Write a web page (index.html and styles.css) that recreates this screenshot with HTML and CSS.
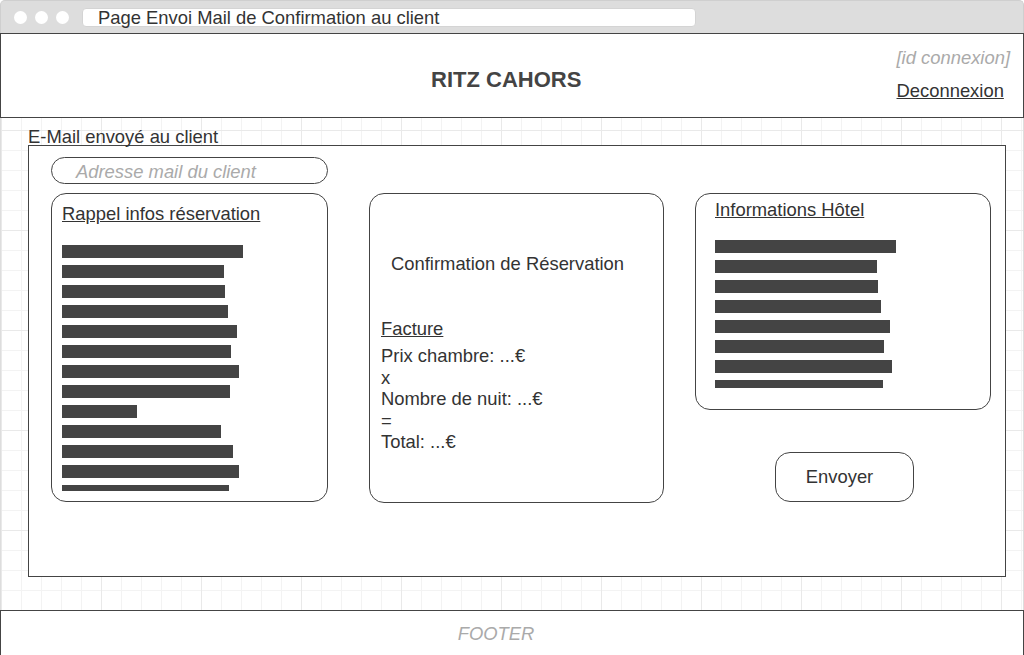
FILE: index.html
```html
<!DOCTYPE html>
<html lang="fr">
<head>
<meta charset="utf-8">
<title>Page Envoi Mail de Confirmation au client</title>
<link rel="stylesheet" href="styles.css">
</head>
<body>
<div class="window">
  <div class="chrome">
    <span class="dot"></span><span class="dot"></span><span class="dot"></span>
    <div class="address">Page Envoi Mail de Confirmation au client</div>
  </div>
  <header class="header">
    <div class="brand">RITZ CAHORS</div>
    <div class="account">
      <div class="id">[id connexion]</div>
      <a class="logout" href="#">Deconnexion</a>
    </div>
  </header>
  <main class="main">
    <div class="section-label">E-Mail envoyé au client</div>
    <div class="frame">
      <div class="email-input">Adresse mail du client</div>
      <div class="row">
        <div class="card card-left">
          <div class="card-title">Rappel infos réservation</div>
          <div class="bars bars-left">
            <div class="bar" style="width:181px"></div>
            <div class="bar" style="width:162px"></div>
            <div class="bar" style="width:163px"></div>
            <div class="bar" style="width:166px"></div>
            <div class="bar" style="width:175px"></div>
            <div class="bar" style="width:169px"></div>
            <div class="bar" style="width:177px"></div>
            <div class="bar" style="width:168px"></div>
            <div class="bar" style="width:75px"></div>
            <div class="bar" style="width:159px"></div>
            <div class="bar" style="width:171px"></div>
            <div class="bar" style="width:177px"></div>
            <div class="bar" style="width:167px"></div>
          </div>
        </div>
        <div class="card card-mid">
          <div class="confirm">Confirmation de Réservation</div>
          <div class="invoice-title">Facture</div>
          <div class="invoice">
            <div>Prix chambre: ...€</div>
            <div>x</div>
            <div>Nombre de nuit: ...€</div>
            <div>=</div>
            <div>Total: ...€</div>
          </div>
        </div>
        <div class="col-right">
          <div class="card card-right">
            <div class="card-title">Informations Hôtel</div>
            <div class="bars bars-right">
              <div class="bar" style="width:181px"></div>
              <div class="bar" style="width:162px"></div>
              <div class="bar" style="width:163px"></div>
              <div class="bar" style="width:166px"></div>
              <div class="bar" style="width:175px"></div>
              <div class="bar" style="width:169px"></div>
              <div class="bar" style="width:177px"></div>
              <div class="bar" style="width:168px"></div>
            </div>
          </div>
          <div class="send">Envoyer</div>
        </div>
      </div>
    </div>
  </main>
  <footer class="footer">FOOTER</footer>
</div>
</body>
</html>
```
FILE: styles.css
```css
* { box-sizing: border-box; }
html, body { margin: 0; padding: 0; }
body {
  width: 1024px;
  height: 655px;
  overflow: hidden;
  font-family: "Liberation Sans", Arial, sans-serif;
  font-size: 18.4px;
  color: #333;
  background: #fff;
}
.window {
  display: flex;
  flex-direction: column;
  width: 1024px;
  height: 655px;
}
.chrome {
  height: 33px;
  flex: none;
  background: #dddddd;
  border: 1px solid #cfcfcf;
  border-bottom: none;
  border-radius: 5px 5px 0 0;
  display: flex;
  align-items: center;
  padding-left: 13px;
}
.dot {
  width: 13px;
  height: 13px;
  border-radius: 50%;
  background: #fff;
  margin-right: 8px;
  flex: none;
}
.address {
  margin-left: 5px;
  width: 614px;
  height: 19px;
  background: #fff;
  border-radius: 4px;
  border: 1px solid #d4d4d4;
  font-size: 18.4px;
  line-height: 17px;
  padding-left: 15px;
  color: #333;
  white-space: nowrap;
}
.header {
  height: 85px;
  flex: none;
  border: 1px solid #444;
  display: grid;
  grid-template-columns: 1fr auto;
  align-items: center;
  padding-left: 115px;
  padding-right: 13px;
}
.brand {
  text-align: center;
  font-weight: bold;
  font-size: 22px;
  color: #444;
  padding-top: 8px;
}
.account {
  display: flex;
  flex-direction: column;
  margin-top: -2px;
}
.id {
  font-style: italic;
  color: #aaa;
  line-height: 20px;
}
.logout {
  margin-top: 13px;
  color: #333;
  text-decoration: underline;
  line-height: 20px;
}
.main {
  flex: 1;
  border-left: 1px solid #ddd;
  border-right: 1px solid #ddd;
  padding: 9px 0 0 27px;
  background-color: #fff;
  background-image:
    linear-gradient(to right, #e9e9e9 1px, transparent 1px),
    linear-gradient(to bottom, #e9e9e9 1px, transparent 1px),
    linear-gradient(to right, #f3f3f3 1px, transparent 1px),
    linear-gradient(to bottom, #f3f3f3 1px, transparent 1px);
  background-size: 100px 100px, 100px 100px, 20px 20px, 20px 20px;
  background-position: 0 12px, 0 12px, 0 12px, 0 12px;
}
.section-label {
  line-height: 18px;
  margin-top: 1px;
  margin-bottom: -1px;
}
.frame {
  width: 978px;
  height: 432px;
  border: 1px solid #444;
  background: #fff;
  padding: 11px 0 0 22px;
}
.email-input {
  width: 277px;
  height: 27px;
  border: 1px solid #444;
  border-radius: 14px;
  font-style: italic;
  color: #aaa;
  line-height: 27px;
  padding-left: 24px;
}
.row {
  display: flex;
  align-items: flex-start;
  margin-top: 9px;
}
.card {
  border: 1px solid #444;
  border-radius: 15px;
  background: #fff;
}
.card-title {
  line-height: 20px;
  text-decoration: underline;
}
.bars {
  overflow: hidden;
  display: flex;
  flex-direction: column;
  gap: 7px;
}
.bar {
  height: 13px;
  flex: none;
  background: #444;
}
.card-left {
  width: 277px;
  height: 309px;
  padding: 10px 0 0 10px;
  margin-right: 41px;
}
.bars-left {
  margin-top: 21px;
  height: 246px;
}
.card-mid {
  width: 295px;
  height: 310px;
  padding: 60px 0 0 11px;
  margin-right: 31px;
}
.confirm {
  line-height: 20px;
  padding-left: 10px;
}
.invoice-title {
  margin-top: 45px;
  line-height: 20px;
  text-decoration: underline;
}
.invoice {
  margin-top: 6px;
  line-height: 21.5px;
}
.col-right {
  width: 296px;
  display: flex;
  flex-direction: column;
  align-items: center;
}
.card-right {
  width: 296px;
  height: 217px;
  padding: 6px 0 0 19px;
  align-self: stretch;
}
.bars-right {
  margin-top: 20px;
  height: 148px;
}
.send {
  margin-top: 42px;
  margin-left: 3px;
  width: 139px;
  height: 50px;
  border: 1px solid #444;
  border-radius: 15px;
  line-height: 48px;
  text-align: center;
  padding-right: 10px;
}
.footer {
  height: 45px;
  flex: none;
  border: 1px solid #444;
  border-bottom: none;
  text-align: center;
  font-style: italic;
  color: #aaa;
  line-height: 46px;
  padding-right: 32px;
}
```
